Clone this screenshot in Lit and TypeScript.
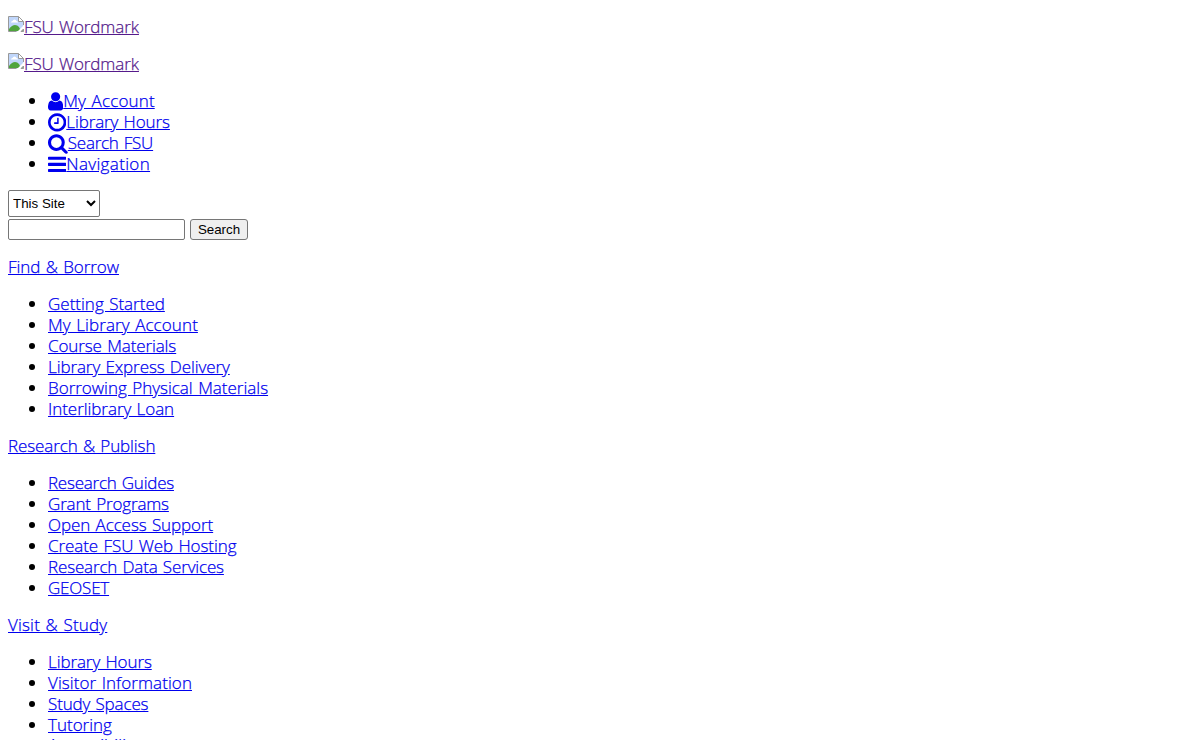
import { css, html, LitElement, svg } from "lit";
import { customElement, property } from "lit/decorators.js";
import { styleMap } from "lit/directives/style-map.js";

interface Link {
    label: string;
    icon?: string;
    // letter spacing in px
    tracking?: number;
}

interface Section {
    title: Link;
    links: Link[];
}

// viewBox and path for each glyph, 1792 units per em
const icons: Record<string, { x: number; width: number; path: string }> = {
    user: {
        x: 256,
        width: 1280,
        path: "M1536 1399q0 109-62.5 187t-150.5 78h-854q-88 0-150.5-78t-62.5-187q0-85 8.5-160.5t31.5-152 58.5-131 94-89 134.5-34.5q131 128 313 128t313-128q76 0 134.5 34.5t94 89 58.5 131 31.5 152 8.5 160.5zm-256-887q0 159-112.5 271.5t-271.5 112.5-271.5-112.5-112.5-271.5 112.5-271.5 271.5-112.5 271.5 112.5 112.5 271.5z",
    },
    clock: {
        x: 128,
        width: 1536,
        path: "M1024 544v448q0 14-9 23t-23 9h-320q-14 0-23-9t-9-23v-64q0-14 9-23t23-9h224v-352q0-14 9-23t23-9h64q14 0 23 9t9 23zm416 352q0-148-73-273t-198-198-273-73-273 73-198 198-73 273 73 273 198 198 273 73 273-73 198-198 73-273zm224 0q0 209-103 385.5t-279.5 279.5-385.5 103-385.5-103-279.5-279.5-103-385.5 103-385.5 279.5-279.5 385.5-103 385.5 103 279.5 279.5 103 385.5z",
    },
    search: {
        x: 64,
        width: 1664,
        path: "M1216 832q0-185-131.5-316.5t-316.5-131.5-316.5 131.5-131.5 316.5 131.5 316.5 316.5 131.5 316.5-131.5 131.5-316.5zm512 832q0 52-38 90t-90 38q-54 0-90-38l-343-342q-179 124-399 124-143 0-273.5-55.5t-225-150-150-225-55.5-273.5 55.5-273.5 150-225 225-150 273.5-55.5 273.5 55.5 225 150 150 225 55.5 273.5q0 220-124 399l343 343q37 37 37 90z",
    },
    bars: {
        x: 128,
        width: 1536,
        path: "M1664 1344v128q0 26-19 45t-45 19h-1408q-26 0-45-19t-19-45v-128q0-26 19-45t45-19h1408q26 0 45 19t19 45zm0-512v128q0 26-19 45t-45 19h-1408q-26 0-45-19t-19-45v-128q0-26 19-45t45-19h1408q26 0 45 19t19 45zm0-512v128q0 26-19 45t-45 19h-1408q-26 0-45-19t-19-45v-128q0-26 19-45t45-19h1408q26 0 45 19t19 45z",
    },
};

const tools: Link[] = [
    { label: "My Account", icon: "user", tracking: 0.15 },
    { label: "Library Hours", icon: "clock", tracking: -0.1 },
    { label: "Search FSU", icon: "search", tracking: -0.25 },
    { label: "Navigation", icon: "bars", tracking: 0.35 },
];

const sections: Section[] = [
    {
        title: { label: "Find & Borrow", tracking: -0.05 },
        links: [
            { label: "Getting Started" },
            { label: "My Library Account", tracking: 0.1 },
            { label: "Course Materials", tracking: -0.1 },
            { label: "Library Express Delivery", tracking: -0.09 },
            { label: "Borrowing Physical Materials" },
            { label: "Interlibrary Loan", tracking: -0.05 },
        ],
    },
    {
        title: { label: "Research & Publish", tracking: -0.1 },
        links: [
            { label: "Research Guides", tracking: -0.23 },
            { label: "Grant Programs", tracking: -0.15 },
            { label: "Open Access Support", tracking: -0.08 },
            { label: "Create FSU Web Hosting", tracking: -0.07 },
            { label: "Research Data Services", tracking: -0.15 },
            { label: "GEOSET", tracking: -0.2 },
        ],
    },
    {
        title: { label: "Visit & Study", tracking: 0.18 },
        links: [
            { label: "Library Hours", tracking: -0.09 },
            { label: "Visitor Information", tracking: 0.07 },
            { label: "Study Spaces", tracking: -0.14 },
            { label: "Tutoring" },
            { label: "Accessibility", tracking: 0.1 },
        ],
    },
];

function trackingStyle(link: Link) {
    return styleMap({ letterSpacing: `${link.tracking ?? 0}px` });
}

@customElement("link-list")
export class LinkList extends LitElement {
    static styles = css`
        :host {
            display: block;
        }

        ul {
            margin: 16px 0;
            padding-left: 40px;
        }

        li {
            height: 21px;
        }

        li:last-child {
            line-height: var(--last-line, 21px);
        }

        a {
            color: #0000ee;
            white-space: nowrap;
        }

        .icon {
            height: 21.33px;
            vertical-align: top;
            fill: currentColor;
            stroke: none;
            transform: translateY(0.7px);
        }
    `;

    @property({ type: Array })
    links: Link[] = [];

    renderIcon(name: string) {
        const { x, width, path } = icons[name];
        return html`<svg class="icon" viewBox="${x} 0 ${width} 1792">${svg`<path d=${path}></path>`}</svg>`;
    }

    render() {
        return html`
            <ul>
                ${this.links.map(
                    (link) => html`<li>
                        <a href="#" style=${trackingStyle(link)}
                            >${link.icon ? this.renderIcon(link.icon) : ""}${link.label}</a
                        >
                    </li>`,
                )}
            </ul>
        `;
    }
}

@customElement("word-mark")
export class WordMark extends LitElement {
    static styles = css`
        :host {
            display: block;
            height: 21px;
            margin: 16px 0;
        }

        a {
            display: flex;
            color: #551a8b;
        }

        span {
            letter-spacing: -0.12px;
            text-decoration: underline;
        }

        svg {
            width: 16px;
            height: 16px;
            stroke-width: 1;
        }
    `;

    render() {
        return html`<a href="#"><svg viewBox="0 0 16 16">
            <path d="M.5 .5h10l5 5v10h-15z" fill="#c0d6fb"></path>
            <path d="M3 6.500q0-1.500 1.500-1.500q.5-1.500 2-1.500t2 1.500q1.500 0 1.500 1.500z" fill="#fff"></path>
            <path d="M1 15v-2q3-4 6-4q2.500 0 4 2l2 4z" fill="#4fa43d"></path>
            <path d="M10.500 .5v5h5" fill="#fff" stroke="#999"></path>
            <path d="M.5 15.500v-15h10l5 5v3.500M.5 15.500h8" fill="none" stroke="#999"></path>
            <path d="M9 16l7-7v3.500l-3.500 3.500z" fill="#fff"></path>
            <path d="M13 15.500h2.500v-2.500z" fill="#79b96b" stroke="#999"></path>
        </svg><span>FSU Wordmark</span></a>`;
    }
}

@customElement("app-root")
export class AppRoot extends LitElement {
    static styles = css`
        :host {
            display: flow-root;
            box-sizing: border-box;
            height: 740px;
            padding: 0 8px;
            overflow: hidden;
            background: #fff;
            color: #000;
            font: 300 17px/21px "Open Sans", "Noto Sans", sans-serif;
            word-spacing: 1px;
            -webkit-text-stroke: 0.25px currentColor;
        }

        p {
            height: 21px;
            margin: 16px 0;
        }

        a {
            color: #0000ee;
        }

        link-list:last-of-type {
            --last-line: 20px;
        }

        form {
            display: flex;
            flex-direction: column;
            align-items: flex-start;
            gap: 2px;
            -webkit-text-stroke: 0;
        }

        .row {
            display: flex;
            gap: 5px;
        }

        select,
        input,
        button {
            box-sizing: border-box;
            margin: 0;
            font: 13.333px "Liberation Sans", Arial, sans-serif;
            word-spacing: normal;
            border: 1px solid #767676;
            border-radius: 2px;
        }

        select {
            width: 92px;
            height: 27px;
            background: #fff;
        }

        input {
            width: 177px;
            height: 21px;
        }

        button {
            width: 58px;
            height: 21px;
            padding: 0;
            border-radius: 3px;
            background: #efefef;
        }
    `;

    render() {
        return html`
            <word-mark></word-mark>
            <word-mark></word-mark>
            <link-list .links=${tools}></link-list>
            <form @submit=${(e: Event) => e.preventDefault()}>
                <select>
                    <option>This Site</option>
                </select>
                <div class="row">
                    <input type="text" />
                    <button>Search</button>
                </div>
            </form>
            ${sections.map(
                ({ title, links }) => html`
                    <p><a href="#" style=${trackingStyle(title)}>${title.label}</a></p>
                    <link-list .links=${links}></link-list>
                `,
            )}
        `;
    }
}
